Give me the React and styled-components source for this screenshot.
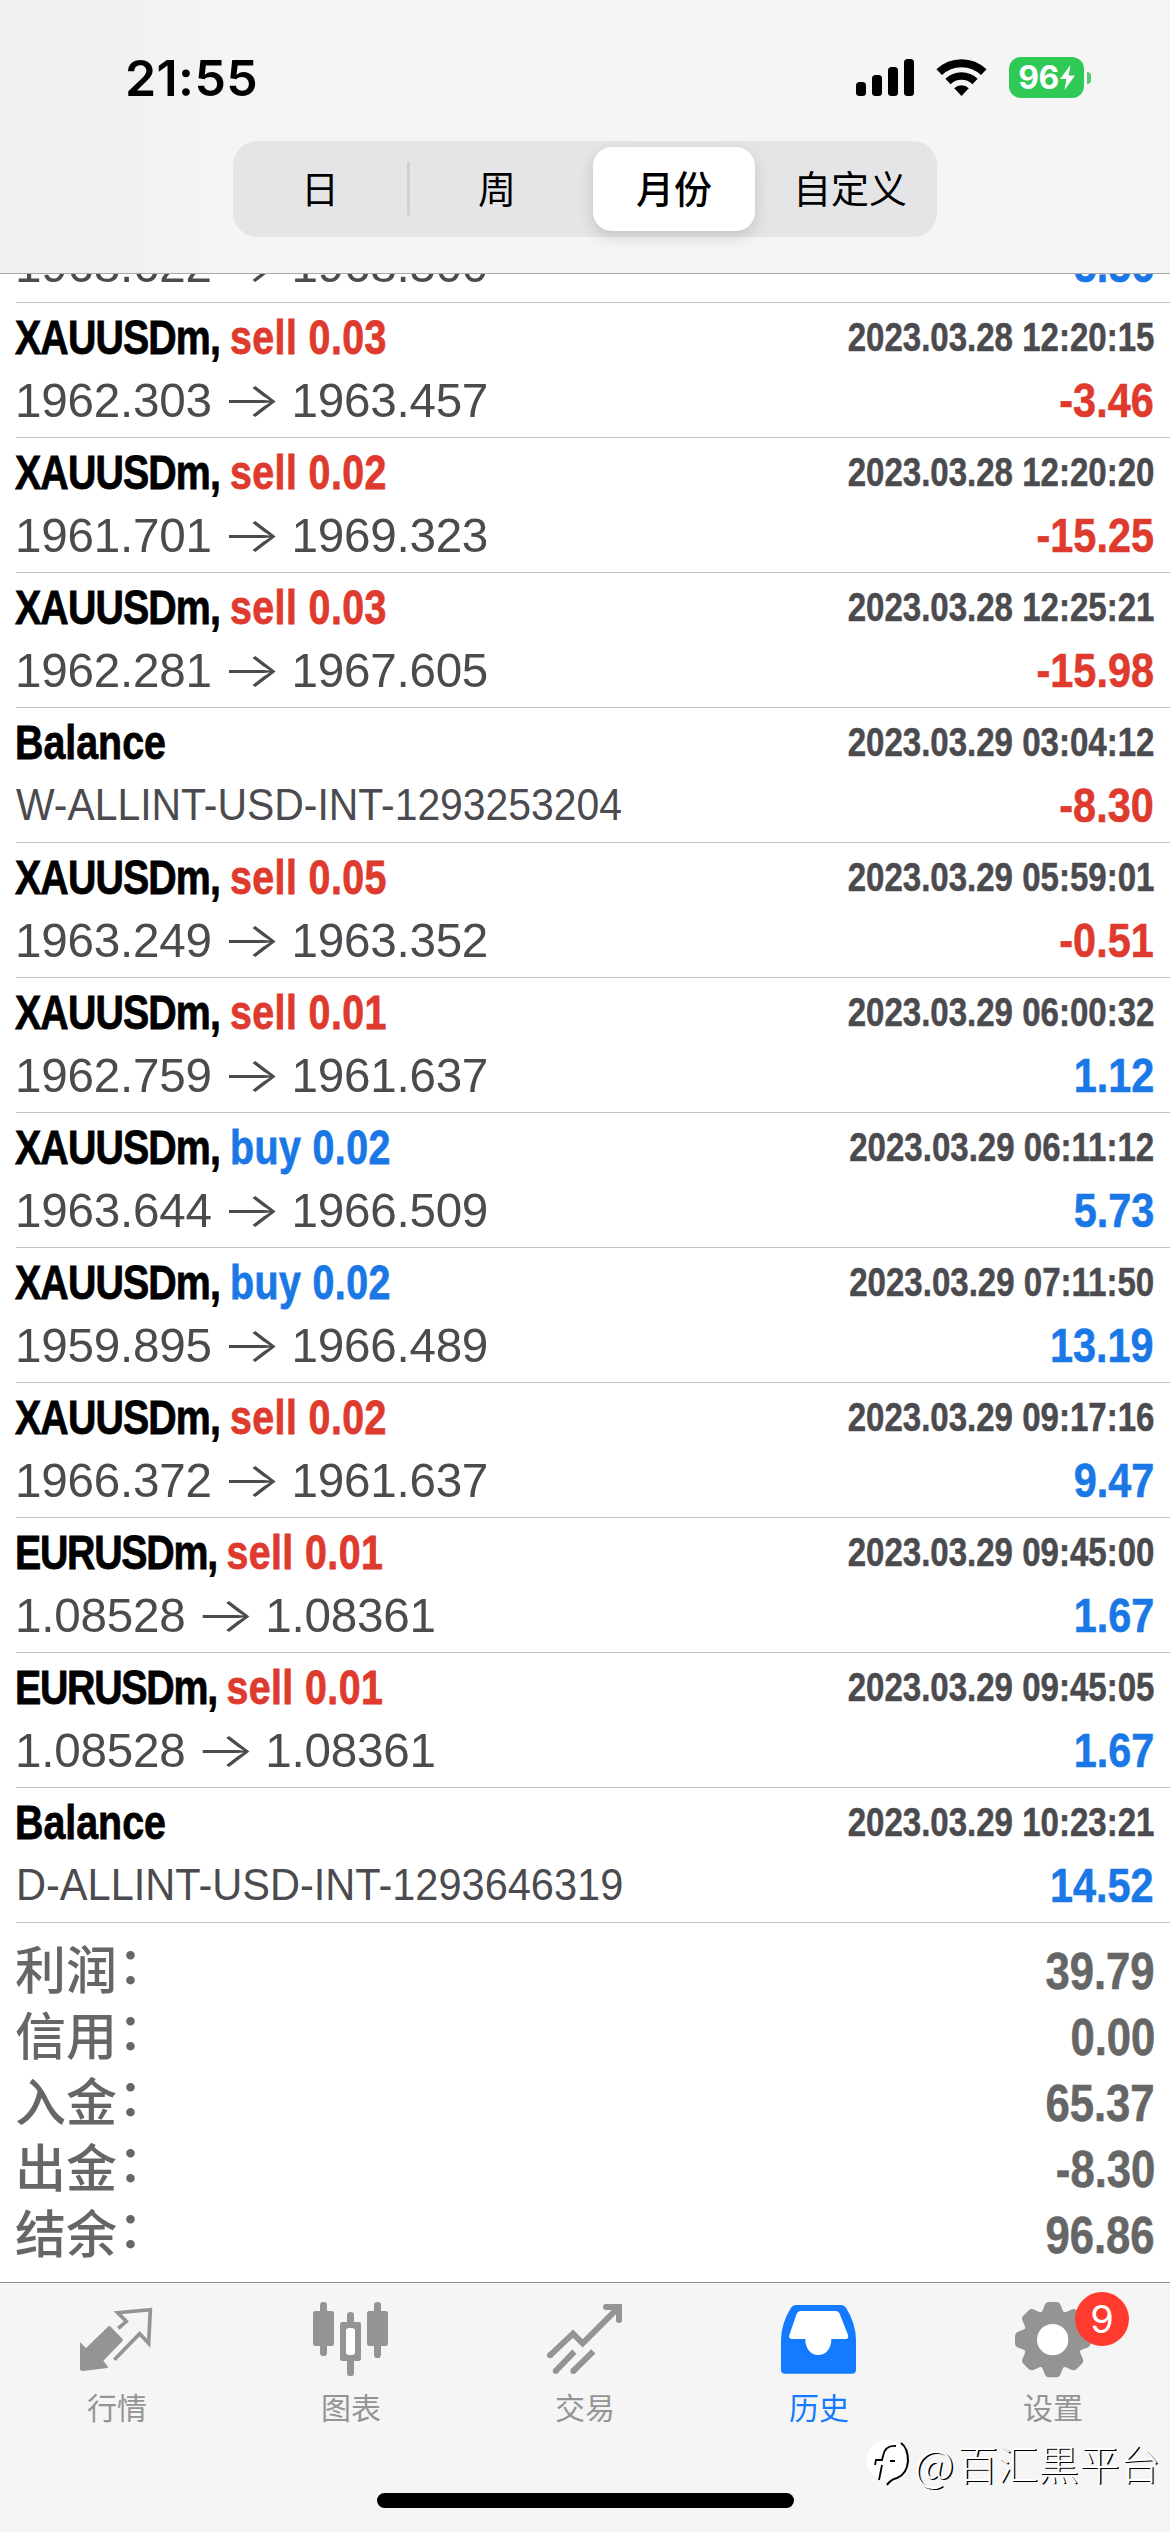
import React from 'react';
import styled, { createGlobalStyle } from 'styled-components';

const GlobalStyle = createGlobalStyle`
  * { box-sizing: border-box; }
  body { margin: 0; background: #fff; }
`;

const latin = `"Liberation Sans", Arial, "Noto Sans CJK SC", sans-serif`;
const cjk = `"Noto Sans CJK SC", sans-serif`;
const sf = `Inter, "Noto Sans CJK SC", sans-serif`;

const RED = '#de3a2e';
const BLUE = '#1a78e6';

const Screen = styled.div`
  position: relative;
  display: flex;
  flex-direction: column;
  width: 1170px;
  height: 2532px;
  overflow: hidden;
  background: #fff;
  font-family: ${latin};
`;

const Header = styled.header`
  display: flex;
  flex-direction: column;
  align-items: center;
  flex: none;
  height: 274px;
  border-bottom: 1px solid #a9a9a9;
  background: linear-gradient(90deg, #f0f0f0 0, #f1f1f2 130px, #f5f5f6 240px, #f5f5f5 100%);
`;

const StatusBar = styled.div`
  display: flex;
  align-items: center;
  justify-content: space-between;
  width: 100%;
  height: 141px;
  padding: 14px 79px 0 125px;
`;

const Clock = styled.div`
  font: 600 50px/60px ${sf};
  letter-spacing: 0.4px;
  color: #000;
`;

const StatusIcons = styled.div`
  display: flex;
  align-items: center;
  gap: 22px;
`;

const Battery = styled.div`
  display: flex;
  align-items: center;
  gap: 3px;
`;

const BatteryBody = styled.div`
  display: flex;
  align-items: center;
  justify-content: center;
  gap: 1px;
  width: 75px;
  height: 41px;
  border-radius: 12px;
  background: #2fc956;
  color: #fff;
  font: 700 32px/41px ${sf};
  letter-spacing: -0.6px;
`;

const BatteryNub = styled.div`
  width: 4px;
  height: 12px;
  border-radius: 0 5px 5px 0;
  background: #55c873;
`;

const Segmented = styled.div`
  display: flex;
  width: 704px;
  height: 96px;
  padding: 6px 0;
  border-radius: 24px;
  background: #e5e5e7;
`;

const Segment = styled.div`
  display: flex;
  align-items: center;
  justify-content: center;
  width: 174px;
  padding-bottom: 5px;
  border-radius: 19px;
  color: #000;
  font: 400 38px/50px ${cjk};
`;

const ActiveSegment = styled(Segment)`
  width: 162px;
  margin-left: 9px;
  background: #fff;
  font-weight: 500;
  box-shadow: 0 6px 16px rgba(0, 0, 0, 0.14);
`;

const LastSegment = styled(Segment)`
  flex: 1;
  padding-left: 8px;
`;

const SegmentDivider = styled.div`
  align-self: center;
  width: 3px;
  height: 54px;
  border-radius: 2px;
  background: #d0d0d2;
`;

const History = styled.main`
  display: flex;
  flex-direction: column;
  justify-content: flex-end;
  flex: 1;
  min-height: 0;
  overflow: hidden;
`;

const Deal = styled.article`
  flex: none;
  height: 135px;
  margin-left: 16px;
  padding: 6px 16px 0 0;
  border-bottom: 1px solid #c2c2c4;
`;

const Line = styled.div`
  display: flex;
  justify-content: space-between;
  height: 56px;
  margin-bottom: 7px;
  line-height: 56px;
  white-space: pre;
`;

const Title = styled.span`
  margin-left: -1px;
  transform: scaleX(0.803);
  transform-origin: 0 50%;
  font-size: 49px;
  font-weight: 700;
  -webkit-text-stroke: 0.8px currentColor;
  color: #000;
`;

const Symbol = styled.span`
  letter-spacing: ${p => (p.$tight ? '-1.6px' : '-1.1px')};
`;

const Side = styled.span`
  letter-spacing: 0.5px;
  color: ${p => p.$color};
`;

const DateTime = styled.span`
  transform: scaleX(0.826);
  transform-origin: 100% 50%;
  font-size: 40px;
  font-weight: 700;
  -webkit-text-stroke: 0.5px currentColor;
  color: #4b4b4f;
`;

const Prices = styled.span`
  display: flex;
  margin-left: -1px;
  transform: scaleX(0.972);
  transform-origin: 0 50%;
  font-size: 49px;
  letter-spacing: -0.25px;
  color: #4b4b4f;
`;

const Arrow = styled.span`
  width: 82px;
  transform: scaleX(1.34);
  text-align: center;
  font-family: ${sf};
  font-weight: 300;
`;

const Comment = styled.span`
  transform: scaleX(${p => p.$stretch});
  transform-origin: 0 50%;
  font-size: 43.6px;
  color: #4b4b4f;
`;

const Profit = styled.span`
  transform: scaleX(0.845);
  transform-origin: 100% 50%;
  font-size: 49px;
  font-weight: 700;
  -webkit-text-stroke: 0.6px currentColor;
  color: ${p => p.$color};
`;

const Summary = styled.section`
  flex: none;
  height: 359px;
  padding: 11px 15px 0 15px;
  color: #666;
`;

const SummaryRow = styled.div`
  display: flex;
  justify-content: space-between;
  height: 66px;
`;

const SummaryLabel = styled.span`
  display: flex;
  font: 500 51px/66px ${cjk};
`;

const Colon = styled.span`
  margin: -2px 0 0 -12px;
  font-family: "Noto Sans CJK JP", sans-serif;
`;

const SummaryValue = styled.span`
  padding-top: 5px;
  transform: scaleX(0.855);
  transform-origin: 100% 50%;
  font-size: 51px;
  line-height: 66px;
  font-weight: 700;
  -webkit-text-stroke: 0.6px currentColor;
`;

const TabBar = styled.nav`
  display: flex;
  flex: none;
  height: 250px;
  border-top: 1px solid #8f8f8f;
  background: #f5f5f5;
`;

const Tab = styled.div`
  display: flex;
  flex-direction: column;
  align-items: center;
  flex: 1;
  padding-top: 19px;
  color: ${p => (p.$active ? '#147aff' : '#949494')};
`;

const TabIcon = styled.div`
  position: relative;
  width: 76px;
  height: 76px;
  svg { display: block; width: 100%; height: 100%; overflow: visible; }
`;

const TabLabel = styled.span`
  margin-top: 6px;
  font: 400 30px/44px ${cjk};
`;

const Badge = styled.span`
  position: absolute;
  left: 60px;
  top: -10px;
  width: 54px;
  height: 54px;
  border-radius: 50%;
  background: #ff3b2f;
  color: #fff;
  font: 400 38px/54px ${sf};
  text-align: center;
`;

const HomeIndicator = styled.div`
  position: absolute;
  left: 377px;
  bottom: 24px;
  width: 417px;
  height: 15px;
  border-radius: 8px;
  background: #000;
`;

const Watermark = styled.div`
  position: absolute;
  right: 10px;
  bottom: 39px;
  display: flex;
  align-items: center;
  color: #fff;
  font: 300 40.6px/60px ${cjk};
  text-shadow: 1.3px 1.3px 0 #000;
`;

const WatermarkAt = styled.span`
  width: 46px;
  font-size: 44px;
  text-align: center;
`;

function SignalIcon() {
  return (
    <svg width="58" height="37" viewBox="0 0 58 37" fill="#000">
      <rect x="0" y="23" width="10" height="14" rx="3.5" />
      <rect x="16" y="16" width="10" height="21" rx="3.5" />
      <rect x="32" y="8" width="10" height="29" rx="3.5" />
      <rect x="48" y="0" width="10" height="37" rx="3.5" />
    </svg>
  );
}

function WifiIcon() {
  return (
    <svg width="51" height="37" viewBox="0 0 51 37" fill="none" stroke="#000">
      <path d="M3.2 13.2a32 32 0 0 1 44.6 0" strokeWidth="8" />
      <path d="M12 22.5a19.3 19.3 0 0 1 27 0" strokeWidth="7.5" />
      <path d="M25.5 37l-7.3-7.7a10.5 10.5 0 0 1 14.6 0z" fill="#000" stroke="none" />
    </svg>
  );
}

function BoltIcon() {
  return (
    <svg width="15" height="25" viewBox="0 0 15 25" fill="#fff">
      <path d="M10.5 0L0 14h6.5L4.5 25 15 10.5H8.6z" />
    </svg>
  );
}

function QuotesIcon() {
  return (
    <svg viewBox="57 36 228 228">
      <path
        d="M60 156l18 18 66-64q4-4 8 0l35 36q4 4 0 8l-57 58 14 18q2 3-2 4l-72 9q-10 1-10-6z"
        fill="currentColor"
      />
      <path
        d="M175 115L199 94 173 68 271 59 266 160 239 131 163 209"
        fill="none" stroke="currentColor" strokeWidth="11"
      />
    </svg>
  );
}

function ChartIcon() {
  return (
    <svg viewBox="759 36 228 228" fill="currentColor">
      <rect x="780" y="36" width="21" height="162" rx="10" />
      <rect x="759" y="63" width="63" height="105" rx="7" />
      <rect x="942" y="36" width="21" height="168" rx="10" />
      <rect x="921" y="63" width="63" height="105" rx="7" />
      <rect x="861" y="66" width="21" height="192" rx="10" />
      <rect x="840" y="96" width="63" height="117" rx="7" />
      <rect x="858" y="114" width="27" height="81" rx="9" fill="#fff" />
    </svg>
  );
}

function TradeIcon() {
  return (
    <svg viewBox="51 36 228 228" fill="none" stroke="currentColor" strokeWidth="18">
      <circle cx="60" cy="196" r="9" fill="currentColor" stroke="none" />
      <circle cx="77" cy="243" r="9" fill="currentColor" stroke="none" />
      <circle cx="130" cy="243" r="9" fill="currentColor" stroke="none" />
      <path d="M60 196L129 131 158 160 262 56M77 243L133 185M130 243L190 184" />
      <path d="M228 51H267V90" strokeLinecap="round" />
    </svg>
  );
}

function HistoryIcon() {
  return (
    <svg viewBox="753 36 228 228">
      <path
        d="M797 45H934Q943 45 948 53Q977 98 978 150V239Q978 251 966 251H765Q753 251 753 239V150Q754 98 783 53Q788 45 797 45Z"
        fill="currentColor"
      />
      <path
        d="M812 63H918Q926 63 929 71L954 135Q957 147 947 147H904C904 178 887 195 865 195C843 195 826 178 826 147H786Q775 147 778 135L800 71Q803 63 812 63Z"
        fill="#fff"
      />
    </svg>
  );
}

function GearIcon() {
  return (
    <svg viewBox="465 36 228 228">
      <g transform="translate(578 149)" fill="currentColor">
        <circle r="88" />
        {[0, 45, 90, 135, 180, 225, 270, 315].map(a => (
          <path
            key={a}
            transform={`rotate(${a})`}
            d="M-40-76Q-31-82-26-98Q-22-113-12-113H12Q22-113 26-98Q31-82 40-76Z"
          />
        ))}
        <circle r="47" fill="#fff" />
      </g>
    </svg>
  );
}

function WatermarkLogo() {
  return (
    <svg width="46" height="52" viewBox="0 0 46 52" fill="none">
      <path d="M21 3C33 3 43 10 43 23C43 35 36 40 24 49L23 43C10 43 2 36 2 24C2 11 10 3 21 3Z" fill="#fff" />
      <path d="M36 6Q43 11 43 24Q42 37 32 41Q25 43 22 48" stroke="#000" strokeWidth="2" />
      <path d="M31 9Q20 8 18 19L17 23H11L10 28M17 28L14 43M25 24H30" stroke="#000" strokeWidth="1.8" />
    </svg>
  );
}

const deals = [
  ['XAUUSDm,', 'sell 0.02', '2023.03.28 12:16:42', '1968.622', '1968.500', '5.56'],
  ['XAUUSDm,', 'sell 0.03', '2023.03.28 12:20:15', '1962.303', '1963.457', '-3.46'],
  ['XAUUSDm,', 'sell 0.02', '2023.03.28 12:20:20', '1961.701', '1969.323', '-15.25'],
  ['XAUUSDm,', 'sell 0.03', '2023.03.28 12:25:21', '1962.281', '1967.605', '-15.98'],
  ['Balance', '', '2023.03.29 03:04:12', 'W-ALLINT-USD-INT-1293253204', '', '-8.30'],
  ['XAUUSDm,', 'sell 0.05', '2023.03.29 05:59:01', '1963.249', '1963.352', '-0.51'],
  ['XAUUSDm,', 'sell 0.01', '2023.03.29 06:00:32', '1962.759', '1961.637', '1.12'],
  ['XAUUSDm,', 'buy 0.02', '2023.03.29 06:11:12', '1963.644', '1966.509', '5.73'],
  ['XAUUSDm,', 'buy 0.02', '2023.03.29 07:11:50', '1959.895', '1966.489', '13.19'],
  ['XAUUSDm,', 'sell 0.02', '2023.03.29 09:17:16', '1966.372', '1961.637', '9.47'],
  ['EURUSDm,', 'sell 0.01', '2023.03.29 09:45:00', '1.08528', '1.08361', '1.67'],
  ['EURUSDm,', 'sell 0.01', '2023.03.29 09:45:05', '1.08528', '1.08361', '1.67'],
  ['Balance', '', '2023.03.29 10:23:21', 'D-ALLINT-USD-INT-1293646319', '', '14.52'],
];

const totals = [
  ['利润', '39.79'],
  ['信用', '0.00'],
  ['入金', '65.37'],
  ['出金', '-8.30'],
  ['结余', '96.86'],
];

const tabs = [
  { label: '行情', Icon: QuotesIcon },
  { label: '图表', Icon: ChartIcon },
  { label: '交易', Icon: TradeIcon },
  { label: '历史', Icon: HistoryIcon, active: true },
  { label: '设置', Icon: GearIcon, badge: '9' },
];

function DealRow({ deal }) {
  const [name, side, time, open, close, profit] = deal;
  return (
    <Deal>
      <Line>
        <Title>
          {side ? <Symbol $tight={name.startsWith('EUR')}>{name} </Symbol> : name}
          {side && <Side $color={side.startsWith('buy') ? BLUE : RED}>{side}</Side>}
        </Title>
        <DateTime>{time}</DateTime>
      </Line>
      <Line>
        {close ? (
          <Prices>{open}<Arrow>→</Arrow>{close}</Prices>
        ) : (
          <Comment $stretch={open.startsWith('W') ? 0.938 : 0.953}>{open}</Comment>
        )}
        <Profit $color={profit.startsWith('-') ? RED : BLUE}>{profit}</Profit>
      </Line>
    </Deal>
  );
}

export default function App() {
  return (
    <Screen>
      <GlobalStyle />
      <Header>
        <StatusBar>
          <Clock>21:55</Clock>
          <StatusIcons>
            <SignalIcon />
            <WifiIcon />
            <Battery>
              <BatteryBody>96<BoltIcon /></BatteryBody>
              <BatteryNub />
            </Battery>
          </StatusIcons>
        </StatusBar>
        <Segmented>
          <Segment>日</Segment>
          <SegmentDivider />
          <Segment>周</Segment>
          <ActiveSegment>月份</ActiveSegment>
          <LastSegment>自定义</LastSegment>
        </Segmented>
      </Header>
      <History>
        {deals.map((d, i) => <DealRow key={i} deal={d} />)}
        <Summary>
          {totals.map(([label, value]) => (
            <SummaryRow key={label}>
              <SummaryLabel>{label}<Colon>：</Colon></SummaryLabel>
              <SummaryValue>{value}</SummaryValue>
            </SummaryRow>
          ))}
        </Summary>
      </History>
      <TabBar>
        {tabs.map(({ label, Icon, active, badge }) => (
          <Tab key={label} $active={active}>
            <TabIcon>
              <Icon />
              {badge && <Badge>{badge}</Badge>}
            </TabIcon>
            <TabLabel>{label}</TabLabel>
          </Tab>
        ))}
      </TabBar>
      <HomeIndicator />
      <Watermark><WatermarkLogo /><WatermarkAt>@</WatermarkAt>百汇黒平台</Watermark>
    </Screen>
  );
}
